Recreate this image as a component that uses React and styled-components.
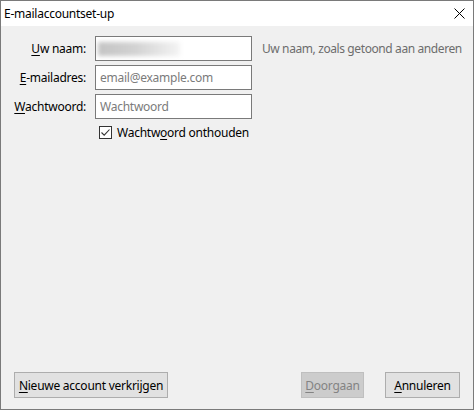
import React from 'react';
import styled, { createGlobalStyle } from 'styled-components';

const GlobalStyle = createGlobalStyle`
  html, body {
    margin: 0;
    padding: 0;
    background: #f0f0f0;
  }
  body {
    font-family: "Noto Sans", "Open Sans", sans-serif;
    font-size: 12px;
    letter-spacing: -0.25px;
    color: #000;
  }
`;

const Window = styled.div`
  box-sizing: border-box;
  width: 474px;
  height: 410px;
  border: 1px solid #7a7a7a;
  background: #f0f0f0;
  display: flex;
  flex-direction: column;
`;

const TitleBar = styled.div`
  height: 25px;
  background: #fff;
  display: flex;
  align-items: center;
  justify-content: space-between;
  padding-left: 3px;
`;

const Title = styled.span`
  font-size: 12px;
  color: #000;
`;

const CloseButton = styled.div`
  width: 28px;
  height: 25px;
  display: flex;
  align-items: center;
  justify-content: center;
`;

const Content = styled.div`
  flex: 1;
  display: flex;
  flex-direction: column;
  justify-content: space-between;
  padding: 10px 13px 11px 13px;
`;

const Form = styled.div`
  display: grid;
  grid-template-columns: 72px 157px auto;
  grid-auto-rows: 25px;
  column-gap: 9px;
  row-gap: 4px;
  align-items: center;
`;

const Label = styled.label`
  text-align: right;
  white-space: nowrap;
`;

const Key = styled.span`
  text-decoration: underline;
  text-underline-offset: 2px;
`;

const Input = styled.div`
  box-sizing: border-box;
  height: 25px;
  border: 1px solid #7a7a7a;
  background: #fff;
  display: flex;
  align-items: center;
  padding-left: 4px;
  color: ${(p) => (p.$placeholder ? '#7b7b7b' : '#000')};
  overflow: hidden;
`;

const Blurred = styled.div`
  width: 82px;
  height: 14px;
  margin-left: -2px;
  background: linear-gradient(90deg, #c4c4c4 0%, #d2d2d2 45%, #f4f4f4 100%);
  filter: blur(2px);
`;

const Hint = styled.span`
  color: #6d6d6d;
  padding-left: 1px;
  letter-spacing: -0.4px;
  white-space: nowrap;
`;

const CheckRow = styled.div`
  grid-column: 2 / 4;
  align-self: start;
  display: flex;
  align-items: center;
  gap: 5px;
  padding-left: 4px;
  height: 18px;
`;

const Box = styled.div`
  box-sizing: border-box;
  width: 13px;
  height: 13px;
  border: 1px solid #333;
  background: #fff;
  display: flex;
  align-items: center;
  justify-content: center;
`;

const ButtonRow = styled.div`
  display: flex;
  align-items: center;
`;

const Spacer = styled.div`
  flex: 1;
`;

const Button = styled.button`
  box-sizing: border-box;
  height: 26px;
  width: ${(p) => p.$w}px;
  margin-left: ${(p) => p.$ml || 0}px;
  padding: 0;
  font-family: inherit;
  font-size: 12px;
  letter-spacing: inherit;
  border: 1px solid ${(p) => (p.disabled ? '#bfbfbf' : '#adadad')};
  background: ${(p) => (p.disabled ? '#cccccc' : '#e1e1e1')};
  color: ${(p) => (p.disabled ? '#838383' : '#000')};
`;

const CloseIcon = () => (
  <svg width="11" height="11" viewBox="0 0 11 11">
    <path d="M0.5 0.5 L10.5 10.5 M10.5 0.5 L0.5 10.5" stroke="#000" strokeWidth="1" fill="none" />
  </svg>
);

const Check = () => (
  <svg width="11" height="11" viewBox="0 0 11 11">
    <path d="M1.5 5.5 L4.2 8.2 L9.5 2.5" stroke="#333" strokeWidth="1.1" fill="none" />
  </svg>
);

export default function App() {
  return (
    <>
      <GlobalStyle />
      <Window>
        <TitleBar>
          <Title>E-mailaccountset-up</Title>
          <CloseButton>
            <CloseIcon />
          </CloseButton>
        </TitleBar>
        <Content>
          <Form>
            <Label>
              <Key>U</Key>w naam:
            </Label>
            <Input>
              <Blurred />
            </Input>
            <Hint>Uw naam, zoals getoond aan anderen</Hint>

            <Label>
              <Key>E</Key>-mailadres:
            </Label>
            <Input $placeholder>email@example.com</Input>
            <span />

            <Label>
              <Key>W</Key>achtwoord:
            </Label>
            <Input $placeholder>Wachtwoord</Input>
            <span />

            <span />
            <CheckRow>
              <Box>
                <Check />
              </Box>
              <span>
                Wachtw<Key>o</Key>ord onthouden
              </span>
            </CheckRow>
          </Form>

          <ButtonRow>
            <Button $w={154}>
              <Key>N</Key>ieuwe account verkrijgen
            </Button>
            <Spacer />
            <Button $w={63} disabled>
              <Key>D</Key>oorgaan
            </Button>
            <Button $w={75} $ml={21}>
              <Key>A</Key>nnuleren
            </Button>
          </ButtonRow>
        </Content>
      </Window>
    </>
  );
}
